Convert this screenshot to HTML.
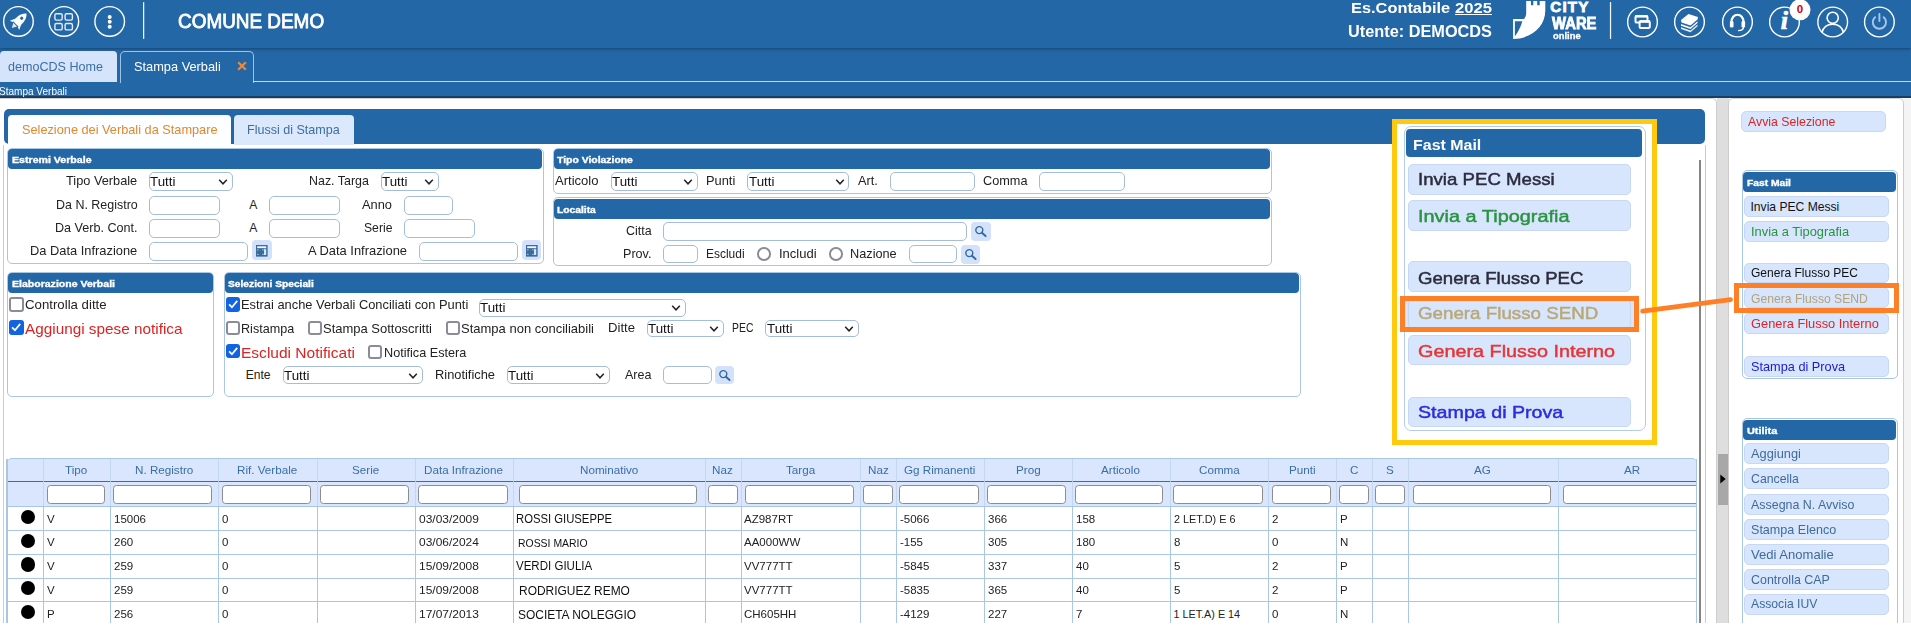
<!DOCTYPE html><html><head><meta charset="utf-8"><title>Stampa Verbali</title><style>
html,body{margin:0;padding:0}body{width:1911px;height:636px;overflow:hidden;position:relative;background:#fff;font-family:"Liberation Sans",sans-serif}
div,svg,span{position:absolute;box-sizing:border-box}span{white-space:pre;line-height:20px;height:20px}
</style></head><body>
<div style="left:0.0px;top:0.0px;width:1911.0px;height:97.0px;background:#2467a7"></div>
<div style="left:0.0px;top:0.0px;width:1911.0px;height:48.0px;background:#2467a7;box-shadow:0 1px 3px rgba(0,0,0,.35)"></div>
<div style="left:0.0px;top:96.4px;width:1911.0px;height:1.2px;background:#173f66"></div>
<svg style="left:0;top:0" width="1911" height="48" viewBox="0 0 1911 48"><circle cx="18.45" cy="21.45" r="14.8" fill="none" stroke="#fff" stroke-width="1.4"/><circle cx="63.85" cy="21.45" r="14.8" fill="none" stroke="#fff" stroke-width="1.4"/><circle cx="109.7" cy="21.45" r="14.8" fill="none" stroke="#fff" stroke-width="1.4"/><g transform="translate(18.45,21.45) rotate(45)" fill="#fff"><path d="M0,-11.3 C4.2,-8 4.7,-2 4,3.6 L-4,3.6 C-4.7,-2 -4.2,-8 0,-11.3 Z"/><path d="M-4,0 L-6.6,5.6 L-3.6,4.4 Z M4,0 L6.6,5.6 L3.6,4.4 Z"/><path d="M-2.6,4.6 L0,9.4 L2.6,4.6 Z" opacity=".85"/><circle cx="0" cy="-4.6" r="1.6" fill="#2467a7"/></g><rect x="54.9" y="13.7" width="7.3" height="6.4" rx="1.5" fill="none" stroke="#e3eefa" stroke-width="1.4"/><rect x="65.1" y="13.7" width="7.3" height="6.4" rx="1.5" fill="none" stroke="#e3eefa" stroke-width="1.4"/><rect x="54.9" y="23.5" width="7.3" height="6.4" rx="1.5" fill="none" stroke="#e3eefa" stroke-width="1.4"/><rect x="65.1" y="23.5" width="7.3" height="6.4" rx="1.5" fill="none" stroke="#e3eefa" stroke-width="1.4"/><circle cx="109.7" cy="16.9" r="2" fill="#fff"/><circle cx="109.7" cy="21.8" r="2" fill="#fff"/><circle cx="109.7" cy="26.7" r="2" fill="#fff"/><rect x="143" y="2.2" width="1.25" height="36.7" fill="#f2f7fd"/><rect x="1609.9" y="2.1" width="1.25" height="36.8" fill="#f2f7fd"/><path fill="#fff" d="M1526.2,1.1 H1531 V5.3 H1533.3 V1.1 H1537.2 V5.3 H1539.7 V1.1 H1545.3 V10.6 C1545.3,27 1531,38.9 1513.1,38.9 V19.1 H1524.1 C1525.6,17 1526.2,15 1526.2,13 Z"/><path fill="#2467a7" d="M1514.9,21.2 H1522.4 C1520.6,27 1518.2,32 1514.9,36.2 Z"/><circle cx="1642.5" cy="22" r="14.85" fill="none" stroke="#fff" stroke-width="1.4"/><circle cx="1689.5" cy="22" r="14.85" fill="none" stroke="#fff" stroke-width="1.4"/><circle cx="1737.5" cy="22" r="14.85" fill="none" stroke="#fff" stroke-width="1.4"/><circle cx="1784.5" cy="22" r="14.85" fill="none" stroke="#fff" stroke-width="1.4"/><circle cx="1832.7" cy="22" r="14.85" fill="none" stroke="#fff" stroke-width="1.4"/><circle cx="1879.4" cy="22" r="14.85" fill="none" stroke="#fff" stroke-width="1.4"/><g fill="none" stroke="#fff" stroke-width="2"><rect x="1635.5" y="16" width="12" height="6.6" rx="1.2" fill="#2467a7"/><path d="M1635.5,16.3 H1647.5" stroke-width="2.6"/><rect x="1639.6" y="21.2" width="10.2" height="6.8" rx="1.2" fill="#2467a7"/><path d="M1639.6,21.5 H1649.8" stroke-width="2.6"/></g><g fill="#fff" transform="translate(1689.5,22)"><path d="M-8.5,-2 L-1,-8 L8.5,-5 L8,-2.5 L1,3.5 L-8,0.5 Z"/><path d="M-8.5,2 L1,5.2 L8,-0.8 L8,1 L1,7 L-8.5,3.8 Z"/><path d="M-8.5,5.2 L1,8.4 L8,2.4 L8,4.2 L1,10.2 L-8.5,7 Z" opacity=".9"/></g><g transform="translate(1737.5,22)" fill="none" stroke="#fff"><path d="M-6.2,1 C-6.2,-10 6.2,-10 6.2,1" stroke-width="2.2"/><rect x="-7.6" y="-1" width="3.6" height="6.6" rx="1.4" fill="#fff" stroke="none"/><rect x="4" y="-1" width="3.6" height="6.6" rx="1.4" fill="#fff" stroke="none"/><path d="M6,5 C6,8 3,8.6 0.5,8.6" stroke-width="1.4"/></g><g transform="translate(1832.7,22)" fill="none" stroke="#fff" stroke-width="1.6"><circle cx="0" cy="-4.2" r="5.6"/><path d="M-10.8,10.5 C-9,3.5 -4,2.2 0,2.2 C4,2.2 9,3.5 10.8,10.5"/></g><g transform="translate(1879.4,22)" fill="none" stroke="#a9c8e8" stroke-width="1.9" stroke-linecap="round"><path d="M-4.3,-4.8 A6.6,6.6 0 1 0 4.3,-4.8"/><path d="M0,-8 L0,-1"/></g><circle cx="1800" cy="9.8" r="10.5" fill="#fff"/></svg>
<span style="left:1780.63px;top:11px;font-size:26px;color:#fff;font-weight:700;font-style:italic;font-family:'Liberation Serif',serif;-webkit-text-stroke:.7px #fff;">i</span>
<span style="left:1796.80px;top:-1px;font-size:11.5px;color:#d40000;font-weight:700;">0</span>
<span style="left:177.90px;top:12px;font-size:19.3px;color:#fff;transform:scaleX(0.9812);transform-origin:0 0;-webkit-text-stroke:.8px #fff;">COMUNE DEMO</span>
<span style="left:1351.30px;top:-2px;font-size:15.4px;color:#fff;font-weight:700;transform:scaleX(1.0636);transform-origin:0 0;">Es.Contabile </span>
<span style="left:1455.00px;top:-2px;font-size:15.4px;color:#fff;font-weight:700;transform:scaleX(1.0803);transform-origin:0 0;text-decoration:underline;">2025</span>
<span style="left:1348.00px;top:22px;font-size:15.8px;color:#fff;font-weight:700;transform:scaleX(1.0319);transform-origin:0 0;">Utente: DEMOCDS</span>
<span style="left:1550.30px;top:-3px;font-size:15.2px;color:#fff;font-weight:700;letter-spacing:1.173px;-webkit-text-stroke:.8px #fff;">CITY</span>
<span style="left:1551.70px;top:14px;font-size:15.6px;color:#fff;font-weight:700;transform:scaleX(0.9512);transform-origin:0 0;-webkit-text-stroke:.8px #fff;">WARE</span>
<span style="left:1552.60px;top:26px;font-size:8.9px;color:#fff;font-weight:700;transform:scaleX(1.0558);transform-origin:0 0;-webkit-text-stroke:.3px #fff;">online</span>
<div style="left:0.0px;top:51.0px;width:117.0px;height:31.0px;background:#d6e4fb;border-radius:4px 4px 0 0"></div>
<div style="left:120.0px;top:51.0px;width:134.0px;height:32.0px;border:1px solid #9cc3e8;border-bottom:none;border-radius:5px 5px 0 0;background:#2467a7"></div>
<div style="left:253.0px;top:81.0px;width:1658.0px;height:1.0px;background:#c2daf2"></div>
<span style="left:8.40px;top:57px;font-size:12.1px;color:#3b6ea5;transform:scaleX(1.0393);transform-origin:0 0;">demoCDS Home</span>
<span style="left:133.50px;top:57px;font-size:12.1px;color:#fff;transform:scaleX(1.0581);transform-origin:0 0;">Stampa Verbali</span>
<svg style="left:237px;top:61.4px" width="10" height="10" viewBox="0 0 10 10"><path d="M1.2,1.2 L8.8,8.8 M8.8,1.2 L1.2,8.8" stroke="#f0883a" stroke-width="2.2"/></svg>
<span style="left:-1.50px;top:81px;font-size:10.5px;color:#fff;transform:scaleX(0.9548);transform-origin:0 0;">Stampa Verbali</span>
<div style="left:0.0px;top:97.5px;width:1911.0px;height:538.5px;background:#f4f4f4"></div>
<div style="left:-10.0px;top:97.5px;width:1726.9px;height:542.5px;background:#fff;border-radius:0 5px 0 0;border:1px solid #cdcdcd"></div>
<div style="left:1716.9px;top:97.5px;width:11.7px;height:542.5px;background:#dedede"></div>
<div style="left:1728.4px;top:98.2px;width:175.6px;height:541.8px;background:#fff;border-radius:5px 5px 0 0;border:1px solid #cdcdcd"></div>
<div style="left:1718.2px;top:454.2px;width:10.1px;height:50.7px;background:#a8a8a8"></div>
<svg style="left:1719px;top:473px" width="8" height="12" viewBox="0 0 8 12"><path d="M1.3,1.5 L6.7,6 L1.3,10.5 Z" fill="#000"/></svg>
<div style="left:3.0px;top:145.0px;width:1703.0px;height:495.0px;border-left:1px solid #b7d1ea;border-right:1px solid #b7d1ea"></div>
<div style="left:3.8px;top:109.4px;width:1701.6px;height:35.0px;background:#2467a7;border-radius:5px"></div>
<div style="left:8.0px;top:115.0px;width:223.0px;height:33.0px;background:#fdfeff;border-radius:4px 4px 0 0"></div>
<div style="left:234.4px;top:115.0px;width:119.6px;height:29.7px;background:#dce8fc;border-radius:4px 4px 0 0"></div>
<span style="left:21.80px;top:120px;font-size:12.1px;color:#e0882f;transform:scaleX(1.0536);transform-origin:0 0;">Selezione dei Verbali da Stampare</span>
<span style="left:247.20px;top:120px;font-size:12.1px;color:#3b6ea5;transform:scaleX(1.0368);transform-origin:0 0;">Flussi di Stampa</span>
<div style="left:1699.0px;top:160.0px;width:2.0px;height:480.0px;background:#858585"></div>
<div style="left:6.5px;top:147.6px;width:537.0px;height:116.0px;border:1px solid #a9c6e4;border-radius:5px;background:#fff"></div>
<div style="left:8.0px;top:149.4px;width:534.0px;height:19.4px;background:#2467a7;border-radius:4px"></div>
<span style="left:11.70px;top:150px;font-size:9.4px;color:#fff;font-weight:700;transform:scaleX(1.1313);transform-origin:0 0;-webkit-text-stroke:.35px #fff;">Estremi Verbale</span>
<span style="left:66.20px;top:171px;font-size:12.1px;color:#222;transform:scaleX(1.0553);transform-origin:0 0;">Tipo Verbale</span>
<span style="left:55.60px;top:195px;font-size:12.1px;color:#222;transform:scaleX(1.0314);transform-origin:0 0;">Da N. Registro</span>
<span style="left:54.80px;top:218px;font-size:12.1px;color:#222;transform:scaleX(1.0412);transform-origin:0 0;">Da Verb. Cont.</span>
<span style="left:30.20px;top:241px;font-size:12.1px;color:#222;transform:scaleX(1.0630);transform-origin:0 0;">Da Data Infrazione</span>
<div style="left:149.0px;top:172.3px;width:84.3px;height:18.3px;border:1px solid #a4bdd8;border-radius:5px;background:#fff"></div>
<span style="left:150.40px;top:172px;font-size:12.5px;color:#111;transform:scaleX(1.0688);transform-origin:0 0;">Tutti</span>
<svg style="left:218.3px;top:178.1px" width="10" height="8" viewBox="0 0 10 8"><path d="M1.2,1.8 L5,5.8 L8.8,1.8" fill="none" stroke="#222" stroke-width="1.5"/></svg>
<span style="left:309.30px;top:171px;font-size:12.1px;color:#222;transform:scaleX(1.0281);transform-origin:0 0;">Naz. Targa</span>
<div style="left:381.0px;top:172.3px;width:57.5px;height:18.3px;border:1px solid #a4bdd8;border-radius:5px;background:#fff"></div>
<span style="left:382.40px;top:172px;font-size:12.5px;color:#111;transform:scaleX(1.0688);transform-origin:0 0;">Tutti</span>
<svg style="left:423.5px;top:178.1px" width="10" height="8" viewBox="0 0 10 8"><path d="M1.2,1.8 L5,5.8 L8.8,1.8" fill="none" stroke="#222" stroke-width="1.5"/></svg>
<div style="left:149.0px;top:196.2px;width:70.8px;height:18.5px;border:1px solid #a4bdd8;border-radius:5px;background:#fff"></div>
<span style="left:249.21px;top:195px;font-size:12.1px;color:#222;">A</span>
<div style="left:269.2px;top:196.2px;width:70.5px;height:18.5px;border:1px solid #a4bdd8;border-radius:5px;background:#fff"></div>
<span style="left:362.20px;top:195px;font-size:12.1px;color:#222;transform:scaleX(1.0619);transform-origin:0 0;">Anno</span>
<div style="left:404.0px;top:196.2px;width:49.0px;height:18.5px;border:1px solid #a4bdd8;border-radius:5px;background:#fff"></div>
<div style="left:149.0px;top:219.3px;width:70.8px;height:18.3px;border:1px solid #a4bdd8;border-radius:5px;background:#fff"></div>
<span style="left:249.21px;top:218px;font-size:12.1px;color:#222;">A</span>
<div style="left:269.2px;top:219.3px;width:70.5px;height:18.3px;border:1px solid #a4bdd8;border-radius:5px;background:#fff"></div>
<span style="left:363.80px;top:218px;font-size:12.1px;color:#222;transform:scaleX(1.0059);transform-origin:0 0;">Serie</span>
<div style="left:404.0px;top:219.3px;width:70.8px;height:18.3px;border:1px solid #a4bdd8;border-radius:5px;background:#fff"></div>
<div style="left:149.0px;top:242.2px;width:99.4px;height:18.4px;border:1px solid #a4bdd8;border-radius:5px;background:#fff"></div>
<div style="left:252.4px;top:240.3px;width:19.3px;height:19.4px;background:#d3e2fa;border-radius:4px"></div>
<svg style="left:256.4px;top:245.0px" width="12" height="12" viewBox="0 0 12 12"><rect x="0.3" y="0.3" width="10.8" height="10.8" fill="#4477a8" stroke="#2f5f8f" stroke-width=".9"/><rect x="1.2" y="1.3" width="9" height="1.9" fill="#f4f9ff"/><rect x="8" y="4.2" width="2.2" height="5.8" fill="#cfeaff"/><path d="M1,4 H8 M1,6.9 H8 M1,9.9 H8 M3.2,4 V10 M5.9,4 V10" stroke="#2f5f8f" stroke-width=".7"/><g fill="#dbeeff"><rect x="1.4" y="4.4" width="1" height="1"/><rect x="1.4" y="9" width="1" height="1"/><rect x="6.4" y="4.4" width="1" height="1"/><rect x="6.4" y="9" width="1" height="1"/></g></svg>
<span style="left:307.80px;top:241px;font-size:12.1px;color:#222;transform:scaleX(1.0670);transform-origin:0 0;">A Data Infrazione</span>
<div style="left:419.3px;top:242.2px;width:99.1px;height:18.4px;border:1px solid #a4bdd8;border-radius:5px;background:#fff"></div>
<div style="left:522.3px;top:240.3px;width:19.0px;height:19.4px;background:#d3e2fa;border-radius:4px"></div>
<svg style="left:526.2px;top:245.0px" width="12" height="12" viewBox="0 0 12 12"><rect x="0.3" y="0.3" width="10.8" height="10.8" fill="#4477a8" stroke="#2f5f8f" stroke-width=".9"/><rect x="1.2" y="1.3" width="9" height="1.9" fill="#f4f9ff"/><rect x="8" y="4.2" width="2.2" height="5.8" fill="#cfeaff"/><path d="M1,4 H8 M1,6.9 H8 M1,9.9 H8 M3.2,4 V10 M5.9,4 V10" stroke="#2f5f8f" stroke-width=".7"/><g fill="#dbeeff"><rect x="1.4" y="4.4" width="1" height="1"/><rect x="1.4" y="9" width="1" height="1"/><rect x="6.4" y="4.4" width="1" height="1"/><rect x="6.4" y="9" width="1" height="1"/></g></svg>
<div style="left:552.5px;top:147.6px;width:719.0px;height:46.6px;border:1px solid #a9c6e4;border-radius:5px;background:#fff"></div>
<div style="left:554.0px;top:149.4px;width:716.0px;height:19.4px;background:#2467a7;border-radius:4px"></div>
<span style="left:557.30px;top:150px;font-size:9.4px;color:#fff;font-weight:700;transform:scaleX(1.1093);transform-origin:0 0;-webkit-text-stroke:.35px #fff;">Tipo Violazione</span>
<span style="left:555.00px;top:171px;font-size:12.1px;color:#222;transform:scaleX(1.0787);transform-origin:0 0;">Articolo</span>
<div style="left:611.0px;top:172.3px;width:86.6px;height:18.3px;border:1px solid #a4bdd8;border-radius:5px;background:#fff"></div>
<span style="left:612.40px;top:172px;font-size:12.5px;color:#111;transform:scaleX(1.0688);transform-origin:0 0;">Tutti</span>
<svg style="left:682.6px;top:178.1px" width="10" height="8" viewBox="0 0 10 8"><path d="M1.2,1.8 L5,5.8 L8.8,1.8" fill="none" stroke="#222" stroke-width="1.5"/></svg>
<span style="left:705.50px;top:171px;font-size:12.1px;color:#222;transform:scaleX(1.0624);transform-origin:0 0;">Punti</span>
<div style="left:747.1px;top:172.3px;width:102.4px;height:18.3px;border:1px solid #a4bdd8;border-radius:5px;background:#fff"></div>
<span style="left:748.50px;top:172px;font-size:12.5px;color:#111;transform:scaleX(1.0688);transform-origin:0 0;">Tutti</span>
<svg style="left:834.5px;top:178.1px" width="10" height="8" viewBox="0 0 10 8"><path d="M1.2,1.8 L5,5.8 L8.8,1.8" fill="none" stroke="#222" stroke-width="1.5"/></svg>
<span style="left:857.80px;top:171px;font-size:12.1px;color:#222;transform:scaleX(1.0516);transform-origin:0 0;">Art.</span>
<div style="left:890.1px;top:172.3px;width:84.6px;height:18.3px;border:1px solid #a4bdd8;border-radius:5px;background:#fff"></div>
<span style="left:982.70px;top:171px;font-size:12.1px;color:#222;transform:scaleX(1.0509);transform-origin:0 0;">Comma</span>
<div style="left:1039.1px;top:172.3px;width:85.8px;height:18.3px;border:1px solid #a4bdd8;border-radius:5px;background:#fff"></div>
<div style="left:552.5px;top:197.3px;width:719.0px;height:69.0px;border:1px solid #a9c6e4;border-radius:5px;background:#fff"></div>
<div style="left:554.0px;top:199.1px;width:716.0px;height:19.8px;background:#2467a7;border-radius:4px"></div>
<span style="left:557.30px;top:200px;font-size:9.4px;color:#fff;font-weight:700;transform:scaleX(1.0949);transform-origin:0 0;-webkit-text-stroke:.35px #fff;">Localita</span>
<span style="left:625.80px;top:221px;font-size:12.1px;color:#222;transform:scaleX(1.0291);transform-origin:0 0;">Citta</span>
<div style="left:663.3px;top:222.2px;width:304.1px;height:18.4px;border:1px solid #a4bdd8;border-radius:5px;background:#fff"></div>
<div style="left:971.2px;top:222.0px;width:19.4px;height:18.8px;background:#d3e2fa;border-radius:4px"></div>
<svg style="left:974.4px;top:224.9px" width="13" height="13" viewBox="0 0 13 13"><circle cx="5.3" cy="5.1" r="3.5" fill="none" stroke="#2f6aa0" stroke-width="1.4"/><path d="M7.9,7.7 L11.6,11" stroke="#2f6aa0" stroke-width="1.9" stroke-linecap="round"/></svg>
<span style="left:622.90px;top:244px;font-size:12.1px;color:#222;transform:scaleX(1.0423);transform-origin:0 0;">Prov.</span>
<div style="left:663.3px;top:245.2px;width:34.3px;height:18.3px;border:1px solid #a4bdd8;border-radius:5px;background:#fff"></div>
<span style="left:705.50px;top:244px;font-size:12.1px;color:#222;transform:scaleX(0.9897);transform-origin:0 0;">Escludi</span>
<div style="left:757.1px;top:247.4px;width:13.6px;height:13.6px;background:#fff;border:2px solid #8c8c99;border-radius:50%"></div>
<span style="left:778.80px;top:244px;font-size:12.1px;color:#222;transform:scaleX(1.0752);transform-origin:0 0;">Includi</span>
<div style="left:829.1px;top:247.4px;width:13.6px;height:13.6px;background:#fff;border:2px solid #8c8c99;border-radius:50%"></div>
<span style="left:850.30px;top:244px;font-size:12.1px;color:#222;transform:scaleX(1.0524);transform-origin:0 0;">Nazione</span>
<div style="left:909.3px;top:245.2px;width:48.2px;height:18.3px;border:1px solid #a4bdd8;border-radius:5px;background:#fff"></div>
<div style="left:961.2px;top:245.0px;width:18.6px;height:18.6px;background:#d3e2fa;border-radius:4px"></div>
<svg style="left:964.0px;top:247.8px" width="13" height="13" viewBox="0 0 13 13"><circle cx="5.3" cy="5.1" r="3.5" fill="none" stroke="#2f6aa0" stroke-width="1.4"/><path d="M7.9,7.7 L11.6,11" stroke="#2f6aa0" stroke-width="1.9" stroke-linecap="round"/></svg>
<div style="left:6.5px;top:271.6px;width:207.9px;height:125.4px;border:1px solid #a9c6e4;border-radius:5px;background:#fff"></div>
<div style="left:8.0px;top:273.4px;width:204.9px;height:19.4px;background:#2467a7;border-radius:4px"></div>
<span style="left:11.90px;top:274px;font-size:9.4px;color:#fff;font-weight:700;transform:scaleX(1.1232);transform-origin:0 0;-webkit-text-stroke:.35px #fff;">Elaborazione Verbali</span>
<div style="left:9.3px;top:297.3px;width:14.3px;height:14.3px;background:#fff;border:2px solid #8c8c99;border-radius:3px"></div>
<span style="left:24.80px;top:295px;font-size:12.1px;color:#222;transform:scaleX(1.0935);transform-origin:0 0;">Controlla ditte</span>
<div style="left:9.3px;top:320.3px;width:14.3px;height:14.3px;background:#1263e0;border-radius:3px"></div>
<svg style="left:9.3px;top:320.3px" width="14.3" height="14.3" viewBox="0 0 14 14"><path d="M3,7.2 L5.8,10 L11,3.8" fill="none" stroke="#fff" stroke-width="1.7"/></svg>
<span style="left:24.80px;top:319px;font-size:14.3px;color:#dc2222;transform:scaleX(1.0711);transform-origin:0 0;">Aggiungi spese notifica</span>
<div style="left:223.6px;top:271.6px;width:1077.2px;height:125.4px;border:1px solid #a9c6e4;border-radius:5px;background:#fff"></div>
<div style="left:225.1px;top:273.4px;width:1074.2px;height:19.4px;background:#2467a7;border-radius:4px"></div>
<span style="left:228.30px;top:274px;font-size:9.4px;color:#fff;font-weight:700;transform:scaleX(1.0904);transform-origin:0 0;-webkit-text-stroke:.35px #fff;">Selezioni Speciali</span>
<div style="left:226.0px;top:297.3px;width:14.3px;height:14.3px;background:#1263e0;border-radius:3px"></div>
<svg style="left:226.0px;top:297.3px" width="14.3" height="14.3" viewBox="0 0 14 14"><path d="M3,7.2 L5.8,10 L11,3.8" fill="none" stroke="#fff" stroke-width="1.7"/></svg>
<span style="left:240.50px;top:295px;font-size:12.1px;color:#222;transform:scaleX(1.0632);transform-origin:0 0;">Estrai anche Verbali Conciliati con Punti</span>
<div style="left:479.0px;top:298.6px;width:206.8px;height:18.1px;border:1px solid #a4bdd8;border-radius:5px;background:#fff"></div>
<span style="left:480.40px;top:298px;font-size:12.5px;color:#111;transform:scaleX(1.0688);transform-origin:0 0;">Tutti</span>
<svg style="left:670.8px;top:304.3px" width="10" height="8" viewBox="0 0 10 8"><path d="M1.2,1.8 L5,5.8 L8.8,1.8" fill="none" stroke="#222" stroke-width="1.5"/></svg>
<div style="left:226.0px;top:320.8px;width:14.3px;height:14.3px;background:#fff;border:2px solid #8c8c99;border-radius:3px"></div>
<span style="left:240.50px;top:319px;font-size:12.1px;color:#222;transform:scaleX(1.0412);transform-origin:0 0;">Ristampa</span>
<div style="left:307.6px;top:320.8px;width:14.3px;height:14.3px;background:#fff;border:2px solid #8c8c99;border-radius:3px"></div>
<span style="left:322.70px;top:319px;font-size:12.1px;color:#222;transform:scaleX(1.0729);transform-origin:0 0;">Stampa Sottoscritti</span>
<div style="left:445.8px;top:320.8px;width:14.3px;height:14.3px;background:#fff;border:2px solid #8c8c99;border-radius:3px"></div>
<span style="left:460.80px;top:319px;font-size:12.1px;color:#222;transform:scaleX(1.0752);transform-origin:0 0;">Stampa non conciliabili</span>
<span style="left:607.70px;top:318px;font-size:12.1px;color:#222;transform:scaleX(1.0854);transform-origin:0 0;">Ditte</span>
<div style="left:647.0px;top:319.6px;width:76.6px;height:17.9px;border:1px solid #a4bdd8;border-radius:5px;background:#fff"></div>
<span style="left:648.40px;top:319px;font-size:12.5px;color:#111;transform:scaleX(1.0688);transform-origin:0 0;">Tutti</span>
<svg style="left:708.6px;top:325.2px" width="10" height="8" viewBox="0 0 10 8"><path d="M1.2,1.8 L5,5.8 L8.8,1.8" fill="none" stroke="#222" stroke-width="1.5"/></svg>
<span style="left:731.80px;top:318px;font-size:12.1px;color:#222;transform:scaleX(0.8603);transform-origin:0 0;">PEC</span>
<div style="left:765.2px;top:319.6px;width:94.1px;height:17.9px;border:1px solid #a4bdd8;border-radius:5px;background:#fff"></div>
<span style="left:766.60px;top:319px;font-size:12.5px;color:#111;transform:scaleX(1.0688);transform-origin:0 0;">Tutti</span>
<svg style="left:844.3px;top:325.2px" width="10" height="8" viewBox="0 0 10 8"><path d="M1.2,1.8 L5,5.8 L8.8,1.8" fill="none" stroke="#222" stroke-width="1.5"/></svg>
<div style="left:226.0px;top:343.5px;width:14.3px;height:14.3px;background:#1263e0;border-radius:3px"></div>
<svg style="left:226.0px;top:343.5px" width="14.3" height="14.3" viewBox="0 0 14 14"><path d="M3,7.2 L5.8,10 L11,3.8" fill="none" stroke="#fff" stroke-width="1.7"/></svg>
<span style="left:240.50px;top:343px;font-size:14.3px;color:#dc2222;transform:scaleX(1.0859);transform-origin:0 0;">Escludi Notificati</span>
<div style="left:368.1px;top:344.8px;width:14.3px;height:14.3px;background:#fff;border:2px solid #8c8c99;border-radius:3px"></div>
<span style="left:383.60px;top:343px;font-size:12.1px;color:#222;transform:scaleX(1.0465);transform-origin:0 0;">Notifica Estera</span>
<span style="left:245.70px;top:365px;font-size:12.1px;color:#222;">Ente</span>
<div style="left:283.0px;top:366.0px;width:139.8px;height:18.4px;border:1px solid #a4bdd8;border-radius:5px;background:#fff"></div>
<span style="left:284.40px;top:366px;font-size:12.5px;color:#111;transform:scaleX(1.0688);transform-origin:0 0;">Tutti</span>
<svg style="left:407.8px;top:371.9px" width="10" height="8" viewBox="0 0 10 8"><path d="M1.2,1.8 L5,5.8 L8.8,1.8" fill="none" stroke="#222" stroke-width="1.5"/></svg>
<span style="left:435.30px;top:365px;font-size:12.1px;color:#222;transform:scaleX(1.0625);transform-origin:0 0;">Rinotifiche</span>
<div style="left:507.0px;top:366.0px;width:102.8px;height:18.4px;border:1px solid #a4bdd8;border-radius:5px;background:#fff"></div>
<span style="left:508.40px;top:366px;font-size:12.5px;color:#111;transform:scaleX(1.0688);transform-origin:0 0;">Tutti</span>
<svg style="left:594.8px;top:371.9px" width="10" height="8" viewBox="0 0 10 8"><path d="M1.2,1.8 L5,5.8 L8.8,1.8" fill="none" stroke="#222" stroke-width="1.5"/></svg>
<span style="left:625.10px;top:365px;font-size:12.1px;color:#222;transform:scaleX(1.0334);transform-origin:0 0;">Area</span>
<div style="left:663.3px;top:366.0px;width:48.4px;height:18.4px;border:1px solid #a4bdd8;border-radius:5px;background:#fff"></div>
<div style="left:715.4px;top:366.0px;width:19.0px;height:18.4px;background:#d3e2fa;border-radius:4px"></div>
<svg style="left:718.4px;top:368.7px" width="13" height="13" viewBox="0 0 13 13"><circle cx="5.3" cy="5.1" r="3.5" fill="none" stroke="#2f6aa0" stroke-width="1.4"/><path d="M7.9,7.7 L11.6,11" stroke="#2f6aa0" stroke-width="1.9" stroke-linecap="round"/></svg>
<div style="left:1392.0px;top:119.0px;width:264.7px;height:326.0px;background:#fff;border:5px solid #ffc90e"></div>
<div style="left:1403.8px;top:126.2px;width:242.7px;height:304.8px;border:1px solid #b4cde6;border-radius:7px;background:#fff"></div>
<div style="left:1405.8px;top:128.8px;width:236.4px;height:28.7px;background:#2467a7;border-radius:4px"></div>
<span style="left:1412.70px;top:135px;font-size:14.5px;color:#fff;font-weight:700;transform:scaleX(1.1008);transform-origin:0 0;filter:blur(.45px);">Fast Mail</span>
<div style="left:1404.5px;top:300.5px;width:230.0px;height:26.8px;background:#d7e5fd"></div>
<div style="left:1407.8px;top:163.8px;width:222.9px;height:31.1px;background:#d7e5fd;border:1px solid #c6d8f3;border-radius:5px"></div>
<span style="left:1417.70px;top:170px;font-size:16.6px;color:#2b2b3b;transform:scaleX(1.1229);transform-origin:0 0;filter:blur(.45px);-webkit-text-stroke:.45px #2b2b3b;">Invia PEC Messi</span>
<div style="left:1407.8px;top:199.8px;width:222.9px;height:31.3px;background:#d7e5fd;border:1px solid #c6d8f3;border-radius:5px"></div>
<span style="left:1417.70px;top:207px;font-size:16.6px;color:#2a9340;transform:scaleX(1.1996);transform-origin:0 0;filter:blur(.45px);-webkit-text-stroke:.45px #2a9340;">Invia a Tipografia</span>
<div style="left:1407.8px;top:261.4px;width:222.9px;height:30.3px;background:#d7e5fd;border:1px solid #c6d8f3;border-radius:5px"></div>
<span style="left:1417.70px;top:269px;font-size:16.6px;color:#2b2b3b;transform:scaleX(1.1209);transform-origin:0 0;filter:blur(.45px);-webkit-text-stroke:.45px #2b2b3b;">Genera Flusso PEC</span>
<div style="left:1407.8px;top:298.7px;width:222.9px;height:30.6px;background:#d7e5fd;border:1px solid #c6d8f3;border-radius:5px"></div>
<span style="left:1417.70px;top:304px;font-size:16.6px;color:#b9a878;transform:scaleX(1.1301);transform-origin:0 0;filter:blur(.45px);-webkit-text-stroke:.45px #b9a878;">Genera Flusso SEND</span>
<div style="left:1407.8px;top:335.0px;width:222.9px;height:29.5px;background:#d7e5fd;border:1px solid #c6d8f3;border-radius:5px"></div>
<span style="left:1417.70px;top:342px;font-size:16.6px;color:#e63535;transform:scaleX(1.1938);transform-origin:0 0;filter:blur(.45px);-webkit-text-stroke:.45px #e63535;">Genera Flusso Interno</span>
<div style="left:1407.8px;top:397.0px;width:222.9px;height:29.9px;background:#d7e5fd;border:1px solid #c6d8f3;border-radius:5px"></div>
<span style="left:1417.70px;top:403px;font-size:16.6px;color:#2b2be0;transform:scaleX(1.1845);transform-origin:0 0;filter:blur(.45px);-webkit-text-stroke:.45px #2b2be0;">Stampa di Prova</span>
<div style="left:1400.2px;top:296.0px;width:238.8px;height:35.8px;border:5px solid #ff7f27"></div>
<svg style="left:1630px;top:290px" width="120" height="30" viewBox="1630 290 120 30"><path d="M1642.6,311.2 L1730.6,299.6" stroke="#ff7f27" stroke-width="4.7" stroke-linecap="round"/></svg>
<div style="left:1741.1px;top:110.8px;width:144.7px;height:21.3px;background:#d7e5fd;border:1px solid #c6d8f3;border-radius:5px"></div>
<span style="left:1747.90px;top:112px;font-size:12.1px;color:#e02323;transform:scaleX(1.0181);transform-origin:0 0;">Avvia Selezione</span>
<div style="left:1742.1px;top:170.3px;width:156.0px;height:209.2px;border:1px solid #a9c6e4;border-radius:5px;background:#fff"></div>
<div style="left:1743.3px;top:172.3px;width:153.1px;height:19.4px;background:#2467a7;border-radius:4px"></div>
<span style="left:1747.20px;top:173px;font-size:9.4px;color:#fff;font-weight:700;transform:scaleX(1.0941);transform-origin:0 0;-webkit-text-stroke:.35px #fff;">Fast Mail</span>
<div style="left:1744.1px;top:195.9px;width:144.7px;height:20.9px;background:#d7e5fd;border:1px solid #c6d8f3;border-radius:5px"></div>
<span style="left:1750.50px;top:197px;font-size:12.1px;color:#111;">Invia PEC Messi</span>
<div style="left:1744.1px;top:220.9px;width:144.7px;height:21.2px;background:#d7e5fd;border:1px solid #c6d8f3;border-radius:5px"></div>
<span style="left:1750.50px;top:222px;font-size:12.1px;color:#2a9340;transform:scaleX(1.0650);transform-origin:0 0;">Invia a Tipografia</span>
<div style="left:1744.1px;top:262.5px;width:144.7px;height:20.9px;background:#d7e5fd;border:1px solid #c6d8f3;border-radius:5px"></div>
<span style="left:1750.50px;top:263px;font-size:12.1px;color:#111;transform:scaleX(0.9949);transform-origin:0 0;">Genera Flusso PEC</span>
<div style="left:1744.1px;top:287.4px;width:144.7px;height:21.0px;background:#d7e5fd;border:1px solid #c6d8f3;border-radius:5px"></div>
<span style="left:1750.50px;top:289px;font-size:12.1px;color:#b3a27a;transform:scaleX(1.0053);transform-origin:0 0;">Genera Flusso SEND</span>
<div style="left:1744.1px;top:312.9px;width:144.7px;height:20.9px;background:#d7e5fd;border:1px solid #c6d8f3;border-radius:5px"></div>
<span style="left:1750.50px;top:314px;font-size:12.1px;color:#e02323;transform:scaleX(1.0620);transform-origin:0 0;">Genera Flusso Interno</span>
<div style="left:1744.1px;top:355.5px;width:144.7px;height:21.8px;background:#d7e5fd;border:1px solid #c6d8f3;border-radius:5px"></div>
<span style="left:1750.50px;top:357px;font-size:12.1px;color:#1a1ad2;transform:scaleX(1.0525);transform-origin:0 0;">Stampa di Prova</span>
<div style="left:1734.2px;top:282.9px;width:164.6px;height:29.9px;border:5px solid #ff7f27"></div>
<div style="left:1742.1px;top:418.2px;width:156.0px;height:241.8px;border:1px solid #a9c6e4;border-radius:5px;background:#fff"></div>
<div style="left:1743.3px;top:420.2px;width:153.1px;height:19.4px;background:#2467a7;border-radius:4px"></div>
<span style="left:1747.00px;top:421px;font-size:9.4px;color:#fff;font-weight:700;transform:scaleX(1.1594);transform-origin:0 0;-webkit-text-stroke:.35px #fff;">Utilita</span>
<div style="left:1744.1px;top:442.9px;width:144.7px;height:20.8px;background:#d7e5fd;border:1px solid #c6d8f3;border-radius:5px"></div>
<span style="left:1750.50px;top:444px;font-size:12.1px;color:#3f6b9a;transform:scaleX(1.0599);transform-origin:0 0;">Aggiungi</span>
<div style="left:1744.1px;top:468.1px;width:144.7px;height:20.8px;background:#d7e5fd;border:1px solid #c6d8f3;border-radius:5px"></div>
<span style="left:1750.50px;top:469px;font-size:12.1px;color:#3f6b9a;transform:scaleX(1.0178);transform-origin:0 0;">Cancella</span>
<div style="left:1744.1px;top:493.8px;width:144.7px;height:20.8px;background:#d7e5fd;border:1px solid #c6d8f3;border-radius:5px"></div>
<span style="left:1750.50px;top:495px;font-size:12.1px;color:#3f6b9a;transform:scaleX(1.0276);transform-origin:0 0;">Assegna N. Avviso</span>
<div style="left:1744.1px;top:519.0px;width:144.7px;height:20.9px;background:#d7e5fd;border:1px solid #c6d8f3;border-radius:5px"></div>
<span style="left:1750.50px;top:520px;font-size:12.1px;color:#3f6b9a;transform:scaleX(1.0386);transform-origin:0 0;">Stampa Elenco</span>
<div style="left:1744.1px;top:543.8px;width:144.7px;height:21.1px;background:#d7e5fd;border:1px solid #c6d8f3;border-radius:5px"></div>
<span style="left:1750.50px;top:545px;font-size:12.1px;color:#3f6b9a;transform:scaleX(1.0801);transform-origin:0 0;">Vedi Anomalie</span>
<div style="left:1744.1px;top:568.9px;width:144.7px;height:21.2px;background:#d7e5fd;border:1px solid #c6d8f3;border-radius:5px"></div>
<span style="left:1750.50px;top:570px;font-size:12.1px;color:#3f6b9a;transform:scaleX(1.0295);transform-origin:0 0;">Controlla CAP</span>
<div style="left:1744.1px;top:593.7px;width:144.7px;height:21.4px;background:#d7e5fd;border:1px solid #c6d8f3;border-radius:5px"></div>
<span style="left:1750.50px;top:594px;font-size:12.1px;color:#3f6b9a;transform:scaleX(1.0080);transform-origin:0 0;">Associa IUV</span>
<div style="left:6.5px;top:458.3px;width:1690.3px;height:48.7px;background:#d9e6fd;border-radius:5px 5px 0 0;border-top:1px solid #a9c6e4"></div>
<div style="left:6.5px;top:481.0px;width:1690.3px;height:1.3px;background:#3670a8"></div>
<div style="left:6.5px;top:506.3px;width:1690.3px;height:1.0px;background:#a9c6e4"></div>
<div style="left:6.5px;top:530.2px;width:1690.3px;height:1.0px;background:#a9c6e4"></div>
<div style="left:6.5px;top:554.1px;width:1690.3px;height:1.0px;background:#a9c6e4"></div>
<div style="left:6.5px;top:577.6px;width:1690.3px;height:1.0px;background:#a9c6e4"></div>
<div style="left:6.5px;top:601.3px;width:1690.3px;height:1.0px;background:#a9c6e4"></div>
<div style="left:6.0px;top:458.8px;width:1.0px;height:181.2px;background:#a9c6e4"></div>
<div style="left:42.8px;top:458.8px;width:1.0px;height:181.2px;background:#a9c6e4"></div>
<div style="left:42.8px;top:459.3px;width:1.0px;height:21.7px;background:#c3d7ef"></div>
<div style="left:42.8px;top:482.3px;width:1.0px;height:24.0px;background:#c3d7ef"></div>
<div style="left:109.8px;top:458.8px;width:1.0px;height:181.2px;background:#a9c6e4"></div>
<div style="left:109.8px;top:459.3px;width:1.0px;height:21.7px;background:#c3d7ef"></div>
<div style="left:109.8px;top:482.3px;width:1.0px;height:24.0px;background:#c3d7ef"></div>
<div style="left:218.1px;top:458.8px;width:1.0px;height:181.2px;background:#a9c6e4"></div>
<div style="left:218.1px;top:459.3px;width:1.0px;height:21.7px;background:#c3d7ef"></div>
<div style="left:218.1px;top:482.3px;width:1.0px;height:24.0px;background:#c3d7ef"></div>
<div style="left:316.9px;top:458.8px;width:1.0px;height:181.2px;background:#a9c6e4"></div>
<div style="left:316.9px;top:459.3px;width:1.0px;height:21.7px;background:#c3d7ef"></div>
<div style="left:316.9px;top:482.3px;width:1.0px;height:24.0px;background:#c3d7ef"></div>
<div style="left:414.8px;top:458.8px;width:1.0px;height:181.2px;background:#a9c6e4"></div>
<div style="left:414.8px;top:459.3px;width:1.0px;height:21.7px;background:#c3d7ef"></div>
<div style="left:414.8px;top:482.3px;width:1.0px;height:24.0px;background:#c3d7ef"></div>
<div style="left:512.9px;top:458.8px;width:1.0px;height:181.2px;background:#a9c6e4"></div>
<div style="left:512.9px;top:459.3px;width:1.0px;height:21.7px;background:#c3d7ef"></div>
<div style="left:512.9px;top:482.3px;width:1.0px;height:24.0px;background:#c3d7ef"></div>
<div style="left:704.9px;top:458.8px;width:1.0px;height:181.2px;background:#a9c6e4"></div>
<div style="left:704.9px;top:459.3px;width:1.0px;height:21.7px;background:#c3d7ef"></div>
<div style="left:704.9px;top:482.3px;width:1.0px;height:24.0px;background:#c3d7ef"></div>
<div style="left:740.7px;top:458.8px;width:1.0px;height:181.2px;background:#a9c6e4"></div>
<div style="left:740.7px;top:459.3px;width:1.0px;height:21.7px;background:#c3d7ef"></div>
<div style="left:740.7px;top:482.3px;width:1.0px;height:24.0px;background:#c3d7ef"></div>
<div style="left:860.0px;top:458.8px;width:1.0px;height:181.2px;background:#a9c6e4"></div>
<div style="left:860.0px;top:459.3px;width:1.0px;height:21.7px;background:#c3d7ef"></div>
<div style="left:860.0px;top:482.3px;width:1.0px;height:24.0px;background:#c3d7ef"></div>
<div style="left:895.8px;top:458.8px;width:1.0px;height:181.2px;background:#a9c6e4"></div>
<div style="left:895.8px;top:459.3px;width:1.0px;height:21.7px;background:#c3d7ef"></div>
<div style="left:895.8px;top:482.3px;width:1.0px;height:24.0px;background:#c3d7ef"></div>
<div style="left:983.9px;top:458.8px;width:1.0px;height:181.2px;background:#a9c6e4"></div>
<div style="left:983.9px;top:459.3px;width:1.0px;height:21.7px;background:#c3d7ef"></div>
<div style="left:983.9px;top:482.3px;width:1.0px;height:24.0px;background:#c3d7ef"></div>
<div style="left:1071.9px;top:458.8px;width:1.0px;height:181.2px;background:#a9c6e4"></div>
<div style="left:1071.9px;top:459.3px;width:1.0px;height:21.7px;background:#c3d7ef"></div>
<div style="left:1071.9px;top:482.3px;width:1.0px;height:24.0px;background:#c3d7ef"></div>
<div style="left:1169.8px;top:458.8px;width:1.0px;height:181.2px;background:#a9c6e4"></div>
<div style="left:1169.8px;top:459.3px;width:1.0px;height:21.7px;background:#c3d7ef"></div>
<div style="left:1169.8px;top:482.3px;width:1.0px;height:24.0px;background:#c3d7ef"></div>
<div style="left:1268.4px;top:458.8px;width:1.0px;height:181.2px;background:#a9c6e4"></div>
<div style="left:1268.4px;top:459.3px;width:1.0px;height:21.7px;background:#c3d7ef"></div>
<div style="left:1268.4px;top:482.3px;width:1.0px;height:24.0px;background:#c3d7ef"></div>
<div style="left:1336.0px;top:458.8px;width:1.0px;height:181.2px;background:#a9c6e4"></div>
<div style="left:1336.0px;top:459.3px;width:1.0px;height:21.7px;background:#c3d7ef"></div>
<div style="left:1336.0px;top:482.3px;width:1.0px;height:24.0px;background:#c3d7ef"></div>
<div style="left:1372.1px;top:458.8px;width:1.0px;height:181.2px;background:#a9c6e4"></div>
<div style="left:1372.1px;top:459.3px;width:1.0px;height:21.7px;background:#c3d7ef"></div>
<div style="left:1372.1px;top:482.3px;width:1.0px;height:24.0px;background:#c3d7ef"></div>
<div style="left:1407.9px;top:458.8px;width:1.0px;height:181.2px;background:#a9c6e4"></div>
<div style="left:1407.9px;top:459.3px;width:1.0px;height:21.7px;background:#c3d7ef"></div>
<div style="left:1407.9px;top:482.3px;width:1.0px;height:24.0px;background:#c3d7ef"></div>
<div style="left:1557.9px;top:458.8px;width:1.0px;height:181.2px;background:#a9c6e4"></div>
<div style="left:1557.9px;top:459.3px;width:1.0px;height:21.7px;background:#c3d7ef"></div>
<div style="left:1557.9px;top:482.3px;width:1.0px;height:24.0px;background:#c3d7ef"></div>
<div style="left:1695.8px;top:458.8px;width:1.0px;height:181.2px;background:#a9c6e4"></div>
<div style="left:6.5px;top:482.6px;width:1689.8px;height:23.7px;overflow:hidden;left:0;width:1696.3px"><div style="left:46.6px;top:2.7px;width:58.2px;height:18.3px;background:#fff;border:1px solid #8c8c8c;border-radius:3.5px"></div><div style="left:113.0px;top:2.7px;width:98.5px;height:18.3px;background:#fff;border:1px solid #8c8c8c;border-radius:3.5px"></div><div style="left:222.1px;top:2.7px;width:88.9px;height:18.3px;background:#fff;border:1px solid #8c8c8c;border-radius:3.5px"></div><div style="left:320.2px;top:2.7px;width:88.7px;height:18.3px;background:#fff;border:1px solid #8c8c8c;border-radius:3.5px"></div><div style="left:418.0px;top:2.7px;width:89.7px;height:18.3px;background:#fff;border:1px solid #8c8c8c;border-radius:3.5px"></div><div style="left:519.1px;top:2.7px;width:177.9px;height:18.3px;background:#fff;border:1px solid #8c8c8c;border-radius:3.5px"></div><div style="left:708.1px;top:2.7px;width:29.8px;height:18.3px;background:#fff;border:1px solid #8c8c8c;border-radius:3.5px"></div><div style="left:744.9px;top:2.7px;width:108.9px;height:18.3px;background:#fff;border:1px solid #8c8c8c;border-radius:3.5px"></div><div style="left:863.1px;top:2.7px;width:29.5px;height:18.3px;background:#fff;border:1px solid #8c8c8c;border-radius:3.5px"></div><div style="left:899.0px;top:2.7px;width:79.7px;height:18.3px;background:#fff;border:1px solid #8c8c8c;border-radius:3.5px"></div><div style="left:987.0px;top:2.7px;width:78.7px;height:18.3px;background:#fff;border:1px solid #8c8c8c;border-radius:3.5px"></div><div style="left:1074.8px;top:2.7px;width:88.7px;height:18.3px;background:#fff;border:1px solid #8c8c8c;border-radius:3.5px"></div><div style="left:1173.2px;top:2.7px;width:89.5px;height:18.3px;background:#fff;border:1px solid #8c8c8c;border-radius:3.5px"></div><div style="left:1272.1px;top:2.7px;width:58.7px;height:18.3px;background:#fff;border:1px solid #8c8c8c;border-radius:3.5px"></div><div style="left:1339.0px;top:2.7px;width:29.8px;height:18.3px;background:#fff;border:1px solid #8c8c8c;border-radius:3.5px"></div><div style="left:1375.1px;top:2.7px;width:29.8px;height:18.3px;background:#fff;border:1px solid #8c8c8c;border-radius:3.5px"></div><div style="left:1413.0px;top:2.7px;width:137.9px;height:18.3px;background:#fff;border:1px solid #8c8c8c;border-radius:3.5px"></div><div style="left:1563.1px;top:2.7px;width:141.9px;height:18.3px;background:#fff;border:1px solid #8c8c8c;border-radius:3.5px"></div></div>
<span style="left:65.18px;top:460px;font-size:10.9px;color:#3b6ea5;transform:scaleX(1.0700);transform-origin:0 0;">Tipo</span>
<span style="left:134.80px;top:460px;font-size:10.9px;color:#3b6ea5;transform:scaleX(1.0700);transform-origin:0 0;">N. Registro</span>
<span style="left:237.37px;top:460px;font-size:10.9px;color:#3b6ea5;transform:scaleX(1.0700);transform-origin:0 0;">Rif. Verbale</span>
<span style="left:352.24px;top:460px;font-size:10.9px;color:#3b6ea5;transform:scaleX(1.0700);transform-origin:0 0;">Serie</span>
<span style="left:424.34px;top:460px;font-size:10.9px;color:#3b6ea5;transform:scaleX(1.0700);transform-origin:0 0;">Data Infrazione</span>
<span style="left:579.75px;top:460px;font-size:10.9px;color:#3b6ea5;transform:scaleX(1.0700);transform-origin:0 0;">Nominativo</span>
<span style="left:712.43px;top:460px;font-size:10.9px;color:#3b6ea5;transform:scaleX(1.0700);transform-origin:0 0;">Naz</span>
<span style="left:785.77px;top:460px;font-size:10.9px;color:#3b6ea5;transform:scaleX(1.0700);transform-origin:0 0;">Targa</span>
<span style="left:867.53px;top:460px;font-size:10.9px;color:#3b6ea5;transform:scaleX(1.0700);transform-origin:0 0;">Naz</span>
<span style="left:904.22px;top:460px;font-size:10.9px;color:#3b6ea5;transform:scaleX(1.0700);transform-origin:0 0;">Gg Rimanenti</span>
<span style="left:1015.59px;top:460px;font-size:10.9px;color:#3b6ea5;transform:scaleX(1.0700);transform-origin:0 0;">Prog</span>
<span style="left:1101.41px;top:460px;font-size:10.9px;color:#3b6ea5;transform:scaleX(1.0700);transform-origin:0 0;">Articolo</span>
<span style="left:1198.70px;top:460px;font-size:10.9px;color:#3b6ea5;transform:scaleX(1.0700);transform-origin:0 0;">Comma</span>
<span style="left:1288.92px;top:460px;font-size:10.9px;color:#3b6ea5;transform:scaleX(1.0700);transform-origin:0 0;">Punti</span>
<span style="left:1349.84px;top:460px;font-size:10.9px;color:#3b6ea5;transform:scaleX(1.0700);transform-origin:0 0;">C</span>
<span style="left:1386.11px;top:460px;font-size:10.9px;color:#3b6ea5;transform:scaleX(1.0700);transform-origin:0 0;">S</span>
<span style="left:1474.47px;top:460px;font-size:10.9px;color:#3b6ea5;transform:scaleX(1.0700);transform-origin:0 0;">AG</span>
<span style="left:1624.10px;top:460px;font-size:10.9px;color:#3b6ea5;transform:scaleX(1.0700);transform-origin:0 0;">AR</span>
<div style="left:20.8px;top:509.7px;width:14.4px;height:14.4px;background:#000;border-radius:50%"></div>
<span style="left:46.50px;top:509px;font-size:10.8px;color:#222;transform:scaleX(1.0650);transform-origin:0 0;">V</span>
<span style="left:113.50px;top:509px;font-size:10.8px;color:#222;transform:scaleX(1.0650);transform-origin:0 0;">15006</span>
<span style="left:221.80px;top:509px;font-size:10.8px;color:#222;transform:scaleX(1.0650);transform-origin:0 0;">0</span>
<span style="left:418.50px;top:509px;font-size:10.8px;color:#222;transform:scaleX(1.1083);transform-origin:0 0;">03/03/2009</span>
<span style="left:516.40px;top:509px;font-size:13.2px;color:#111;transform:scaleX(0.8561);transform-origin:0 0;">ROSSI GIUSEPPE</span>
<span style="left:744.40px;top:509px;font-size:10.8px;color:#222;transform:scaleX(1.0650);transform-origin:0 0;">AZ987RT</span>
<span style="left:899.50px;top:509px;font-size:10.8px;color:#222;transform:scaleX(1.0650);transform-origin:0 0;">-5066</span>
<span style="left:987.60px;top:509px;font-size:10.8px;color:#222;transform:scaleX(1.0650);transform-origin:0 0;">366</span>
<span style="left:1075.60px;top:509px;font-size:10.8px;color:#222;transform:scaleX(1.0650);transform-origin:0 0;">158</span>
<span style="left:1173.50px;top:509px;font-size:10.8px;color:#222;transform:scaleX(1.0046);transform-origin:0 0;">2 LET.D) E 6</span>
<span style="left:1272.10px;top:509px;font-size:10.8px;color:#222;transform:scaleX(1.0650);transform-origin:0 0;">2</span>
<span style="left:1339.70px;top:509px;font-size:10.8px;color:#222;transform:scaleX(1.0650);transform-origin:0 0;">P</span>
<div style="left:20.8px;top:533.6px;width:14.4px;height:14.4px;background:#000;border-radius:50%"></div>
<span style="left:46.50px;top:532px;font-size:10.8px;color:#222;transform:scaleX(1.0650);transform-origin:0 0;">V</span>
<span style="left:113.50px;top:532px;font-size:10.8px;color:#222;transform:scaleX(1.0650);transform-origin:0 0;">260</span>
<span style="left:221.80px;top:532px;font-size:10.8px;color:#222;transform:scaleX(1.0650);transform-origin:0 0;">0</span>
<span style="left:418.50px;top:532px;font-size:10.8px;color:#222;transform:scaleX(1.1083);transform-origin:0 0;">03/06/2024</span>
<span style="left:517.50px;top:533px;font-size:11.5px;color:#111;transform:scaleX(0.9076);transform-origin:0 0;">ROSSI MARIO</span>
<span style="left:744.40px;top:532px;font-size:10.8px;color:#222;transform:scaleX(1.0650);transform-origin:0 0;">AA000WW</span>
<span style="left:899.50px;top:532px;font-size:10.8px;color:#222;transform:scaleX(1.0650);transform-origin:0 0;">-155</span>
<span style="left:987.60px;top:532px;font-size:10.8px;color:#222;transform:scaleX(1.0650);transform-origin:0 0;">305</span>
<span style="left:1075.60px;top:532px;font-size:10.8px;color:#222;transform:scaleX(1.0650);transform-origin:0 0;">180</span>
<span style="left:1173.50px;top:532px;font-size:10.8px;color:#222;transform:scaleX(1.0650);transform-origin:0 0;">8</span>
<span style="left:1272.10px;top:532px;font-size:10.8px;color:#222;transform:scaleX(1.0650);transform-origin:0 0;">0</span>
<span style="left:1339.70px;top:532px;font-size:10.8px;color:#222;transform:scaleX(1.0650);transform-origin:0 0;">N</span>
<div style="left:20.8px;top:557.2px;width:14.4px;height:14.4px;background:#000;border-radius:50%"></div>
<span style="left:46.50px;top:556px;font-size:10.8px;color:#222;transform:scaleX(1.0650);transform-origin:0 0;">V</span>
<span style="left:113.50px;top:556px;font-size:10.8px;color:#222;transform:scaleX(1.0650);transform-origin:0 0;">259</span>
<span style="left:221.80px;top:556px;font-size:10.8px;color:#222;transform:scaleX(1.0650);transform-origin:0 0;">0</span>
<span style="left:418.50px;top:556px;font-size:10.8px;color:#222;transform:scaleX(1.1083);transform-origin:0 0;">15/09/2008</span>
<span style="left:515.60px;top:556px;font-size:13.2px;color:#111;transform:scaleX(0.8737);transform-origin:0 0;">VERDI GIULIA</span>
<span style="left:744.40px;top:556px;font-size:10.8px;color:#222;transform:scaleX(1.0650);transform-origin:0 0;">VV777TT</span>
<span style="left:899.50px;top:556px;font-size:10.8px;color:#222;transform:scaleX(1.0650);transform-origin:0 0;">-5845</span>
<span style="left:987.60px;top:556px;font-size:10.8px;color:#222;transform:scaleX(1.0650);transform-origin:0 0;">337</span>
<span style="left:1075.60px;top:556px;font-size:10.8px;color:#222;transform:scaleX(1.0650);transform-origin:0 0;">40</span>
<span style="left:1173.50px;top:556px;font-size:10.8px;color:#222;transform:scaleX(1.0650);transform-origin:0 0;">5</span>
<span style="left:1272.10px;top:556px;font-size:10.8px;color:#222;transform:scaleX(1.0650);transform-origin:0 0;">2</span>
<span style="left:1339.70px;top:556px;font-size:10.8px;color:#222;transform:scaleX(1.0650);transform-origin:0 0;">P</span>
<div style="left:20.8px;top:581.0px;width:14.4px;height:14.4px;background:#000;border-radius:50%"></div>
<span style="left:46.50px;top:580px;font-size:10.8px;color:#222;transform:scaleX(1.0650);transform-origin:0 0;">V</span>
<span style="left:113.50px;top:580px;font-size:10.8px;color:#222;transform:scaleX(1.0650);transform-origin:0 0;">259</span>
<span style="left:221.80px;top:580px;font-size:10.8px;color:#222;transform:scaleX(1.0650);transform-origin:0 0;">0</span>
<span style="left:418.50px;top:580px;font-size:10.8px;color:#222;transform:scaleX(1.1083);transform-origin:0 0;">15/09/2008</span>
<span style="left:518.90px;top:581px;font-size:13.2px;color:#111;transform:scaleX(0.9063);transform-origin:0 0;">RODRIGUEZ REMO</span>
<span style="left:744.40px;top:580px;font-size:10.8px;color:#222;transform:scaleX(1.0650);transform-origin:0 0;">VV777TT</span>
<span style="left:899.50px;top:580px;font-size:10.8px;color:#222;transform:scaleX(1.0650);transform-origin:0 0;">-5835</span>
<span style="left:987.60px;top:580px;font-size:10.8px;color:#222;transform:scaleX(1.0650);transform-origin:0 0;">365</span>
<span style="left:1075.60px;top:580px;font-size:10.8px;color:#222;transform:scaleX(1.0650);transform-origin:0 0;">40</span>
<span style="left:1173.50px;top:580px;font-size:10.8px;color:#222;transform:scaleX(1.0650);transform-origin:0 0;">5</span>
<span style="left:1272.10px;top:580px;font-size:10.8px;color:#222;transform:scaleX(1.0650);transform-origin:0 0;">2</span>
<span style="left:1339.70px;top:580px;font-size:10.8px;color:#222;transform:scaleX(1.0650);transform-origin:0 0;">P</span>
<div style="left:20.8px;top:604.7px;width:14.4px;height:14.4px;background:#000;border-radius:50%"></div>
<span style="left:46.50px;top:604px;font-size:10.8px;color:#222;transform:scaleX(1.0650);transform-origin:0 0;">P</span>
<span style="left:113.50px;top:604px;font-size:10.8px;color:#222;transform:scaleX(1.0650);transform-origin:0 0;">256</span>
<span style="left:221.80px;top:604px;font-size:10.8px;color:#222;transform:scaleX(1.0650);transform-origin:0 0;">0</span>
<span style="left:418.50px;top:604px;font-size:10.8px;color:#222;transform:scaleX(1.1083);transform-origin:0 0;">17/07/2013</span>
<span style="left:517.80px;top:605px;font-size:13.2px;color:#111;transform:scaleX(0.9063);transform-origin:0 0;">SOCIETA NOLEGGIO</span>
<span style="left:744.40px;top:604px;font-size:10.8px;color:#222;transform:scaleX(1.0650);transform-origin:0 0;">CH605HH</span>
<span style="left:899.50px;top:604px;font-size:10.8px;color:#222;transform:scaleX(1.0650);transform-origin:0 0;">-4129</span>
<span style="left:987.60px;top:604px;font-size:10.8px;color:#222;transform:scaleX(1.0650);transform-origin:0 0;">227</span>
<span style="left:1075.60px;top:604px;font-size:10.8px;color:#222;transform:scaleX(1.0650);transform-origin:0 0;">7</span>
<span style="left:1173.50px;top:604px;font-size:10.8px;color:#222;">1 LET.A) E 14</span>
<span style="left:1272.10px;top:604px;font-size:10.8px;color:#222;transform:scaleX(1.0650);transform-origin:0 0;">0</span>
<span style="left:1339.70px;top:604px;font-size:10.8px;color:#222;transform:scaleX(1.0650);transform-origin:0 0;">N</span>
<div style="left:6.0px;top:459.0px;width:1.8px;height:181.0px;background:#a9c6e4"></div>
<div style="left:0.0px;top:623.0px;width:1911.0px;height:13.0px;background:#fff"></div>
</body></html>
